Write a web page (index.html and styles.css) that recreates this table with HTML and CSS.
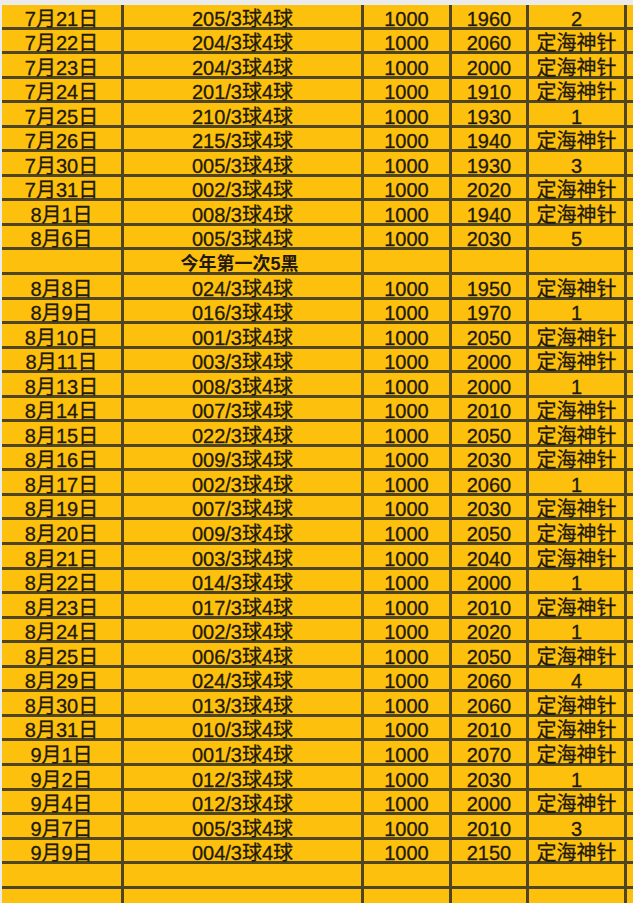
FILE: index.html
```html
<!DOCTYPE html>
<html lang="zh-CN">
<head>
<meta charset="utf-8">
<title>表格</title>
<link rel="stylesheet" href="styles.css">
</head>
<body>
<div class="page">
  <div class="sheet">
    <div class="row"><div class="c">7月21日</div><div class="c">205/3球4球</div><div class="c">1000</div><div class="c">1960</div><div class="c">2</div><div class="c"></div></div>
    <div class="row"><div class="c">7月22日</div><div class="c">204/3球4球</div><div class="c">1000</div><div class="c">2060</div><div class="c">定海神针</div><div class="c"></div></div>
    <div class="row"><div class="c">7月23日</div><div class="c">204/3球4球</div><div class="c">1000</div><div class="c">2000</div><div class="c">定海神针</div><div class="c"></div></div>
    <div class="row"><div class="c">7月24日</div><div class="c">201/3球4球</div><div class="c">1000</div><div class="c">1910</div><div class="c">定海神针</div><div class="c"></div></div>
    <div class="row"><div class="c">7月25日</div><div class="c">210/3球4球</div><div class="c">1000</div><div class="c">1930</div><div class="c">1</div><div class="c"></div></div>
    <div class="row"><div class="c">7月26日</div><div class="c">215/3球4球</div><div class="c">1000</div><div class="c">1940</div><div class="c">定海神针</div><div class="c"></div></div>
    <div class="row"><div class="c">7月30日</div><div class="c">005/3球4球</div><div class="c">1000</div><div class="c">1930</div><div class="c">3</div><div class="c"></div></div>
    <div class="row"><div class="c">7月31日</div><div class="c">002/3球4球</div><div class="c">1000</div><div class="c">2020</div><div class="c">定海神针</div><div class="c"></div></div>
    <div class="row"><div class="c">8月1日</div><div class="c">008/3球4球</div><div class="c">1000</div><div class="c">1940</div><div class="c">定海神针</div><div class="c"></div></div>
    <div class="row"><div class="c">8月6日</div><div class="c">005/3球4球</div><div class="c">1000</div><div class="c">2030</div><div class="c">5</div><div class="c"></div></div>
    <div class="row"><div class="c"></div><div class="c note">今年第一次5黑</div><div class="c"></div><div class="c"></div><div class="c"></div><div class="c"></div></div>
    <div class="row"><div class="c">8月8日</div><div class="c">024/3球4球</div><div class="c">1000</div><div class="c">1950</div><div class="c">定海神针</div><div class="c"></div></div>
    <div class="row"><div class="c">8月9日</div><div class="c">016/3球4球</div><div class="c">1000</div><div class="c">1970</div><div class="c">1</div><div class="c"></div></div>
    <div class="row"><div class="c">8月10日</div><div class="c">001/3球4球</div><div class="c">1000</div><div class="c">2050</div><div class="c">定海神针</div><div class="c"></div></div>
    <div class="row"><div class="c">8月11日</div><div class="c">003/3球4球</div><div class="c">1000</div><div class="c">2000</div><div class="c">定海神针</div><div class="c"></div></div>
    <div class="row"><div class="c">8月13日</div><div class="c">008/3球4球</div><div class="c">1000</div><div class="c">2000</div><div class="c">1</div><div class="c"></div></div>
    <div class="row"><div class="c">8月14日</div><div class="c">007/3球4球</div><div class="c">1000</div><div class="c">2010</div><div class="c">定海神针</div><div class="c"></div></div>
    <div class="row"><div class="c">8月15日</div><div class="c">022/3球4球</div><div class="c">1000</div><div class="c">2050</div><div class="c">定海神针</div><div class="c"></div></div>
    <div class="row"><div class="c">8月16日</div><div class="c">009/3球4球</div><div class="c">1000</div><div class="c">2030</div><div class="c">定海神针</div><div class="c"></div></div>
    <div class="row"><div class="c">8月17日</div><div class="c">002/3球4球</div><div class="c">1000</div><div class="c">2060</div><div class="c">1</div><div class="c"></div></div>
    <div class="row"><div class="c">8月19日</div><div class="c">007/3球4球</div><div class="c">1000</div><div class="c">2030</div><div class="c">定海神针</div><div class="c"></div></div>
    <div class="row"><div class="c">8月20日</div><div class="c">009/3球4球</div><div class="c">1000</div><div class="c">2050</div><div class="c">定海神针</div><div class="c"></div></div>
    <div class="row"><div class="c">8月21日</div><div class="c">003/3球4球</div><div class="c">1000</div><div class="c">2040</div><div class="c">定海神针</div><div class="c"></div></div>
    <div class="row"><div class="c">8月22日</div><div class="c">014/3球4球</div><div class="c">1000</div><div class="c">2000</div><div class="c">1</div><div class="c"></div></div>
    <div class="row"><div class="c">8月23日</div><div class="c">017/3球4球</div><div class="c">1000</div><div class="c">2010</div><div class="c">定海神针</div><div class="c"></div></div>
    <div class="row"><div class="c">8月24日</div><div class="c">002/3球4球</div><div class="c">1000</div><div class="c">2020</div><div class="c">1</div><div class="c"></div></div>
    <div class="row"><div class="c">8月25日</div><div class="c">006/3球4球</div><div class="c">1000</div><div class="c">2050</div><div class="c">定海神针</div><div class="c"></div></div>
    <div class="row"><div class="c">8月29日</div><div class="c">024/3球4球</div><div class="c">1000</div><div class="c">2060</div><div class="c">4</div><div class="c"></div></div>
    <div class="row"><div class="c">8月30日</div><div class="c">013/3球4球</div><div class="c">1000</div><div class="c">2060</div><div class="c">定海神针</div><div class="c"></div></div>
    <div class="row"><div class="c">8月31日</div><div class="c">010/3球4球</div><div class="c">1000</div><div class="c">2010</div><div class="c">定海神针</div><div class="c"></div></div>
    <div class="row"><div class="c">9月1日</div><div class="c">001/3球4球</div><div class="c">1000</div><div class="c">2070</div><div class="c">定海神针</div><div class="c"></div></div>
    <div class="row"><div class="c">9月2日</div><div class="c">012/3球4球</div><div class="c">1000</div><div class="c">2030</div><div class="c">1</div><div class="c"></div></div>
    <div class="row"><div class="c">9月4日</div><div class="c">012/3球4球</div><div class="c">1000</div><div class="c">2000</div><div class="c">定海神针</div><div class="c"></div></div>
    <div class="row"><div class="c">9月7日</div><div class="c">005/3球4球</div><div class="c">1000</div><div class="c">2010</div><div class="c">3</div><div class="c"></div></div>
    <div class="row"><div class="c">9月9日</div><div class="c">004/3球4球</div><div class="c">1000</div><div class="c">2150</div><div class="c">定海神针</div><div class="c"></div></div>
    <div class="row"><div class="c"></div><div class="c"></div><div class="c"></div><div class="c"></div><div class="c"></div><div class="c"></div></div>
    <div class="row"><div class="c"></div><div class="c"></div><div class="c"></div><div class="c"></div><div class="c"></div><div class="c"></div></div>
  </div>
</div>
</body>
</html>
```

FILE: styles.css
```css
html, body {
  margin: 0;
  padding: 0;
  width: 633px;
  height: 903px;
  overflow: hidden;
  background: #ebebeb;
}

.page {
  padding: 5px 0 0 2px;
  width: 640px;
}

.sheet {
  display: flex;
  flex-direction: column;
  gap: 3px;
  background: #4f4522;
  font-family: "Liberation Sans", "Noto Sans CJK SC", sans-serif;
  font-size: 20px;
  color: #22190c;
  -webkit-text-stroke: 0.3px #22190c;
}

.row {
  display: grid;
  grid-template-columns: 119px 237px 85px 74px 95px 20px;
  column-gap: 3px;
  height: 21.56px;
}

.c {
  background: #fdc00c;
  display: flex;
  align-items: flex-end;
  justify-content: center;
  line-height: 15px;
  white-space: nowrap;
}

.note {
  font-weight: bold;
  font-size: 18px;
  padding-right: 6px;
  -webkit-text-stroke: 0;
}
```
